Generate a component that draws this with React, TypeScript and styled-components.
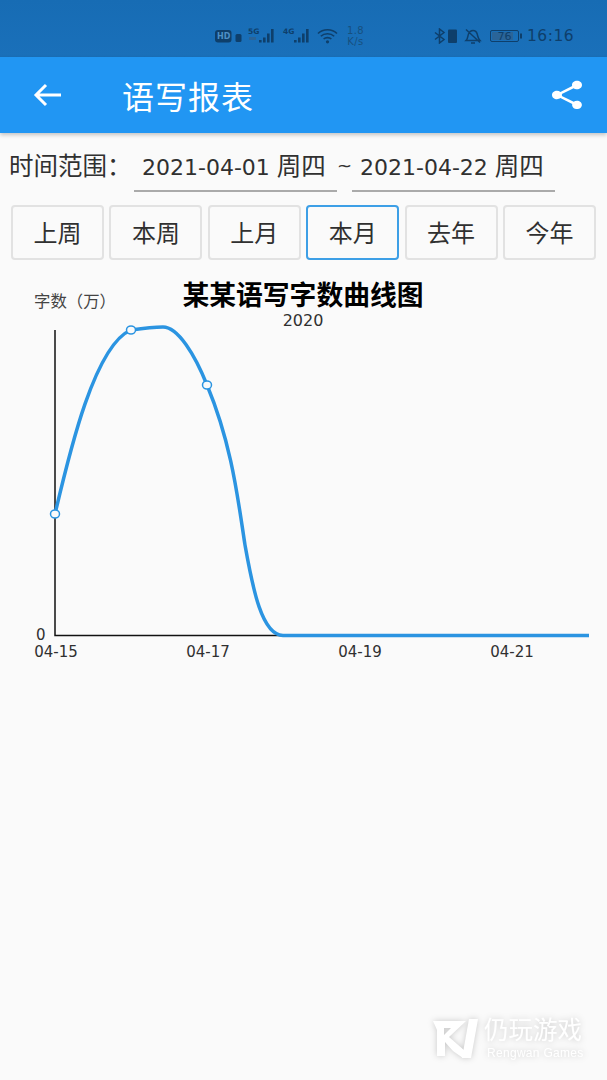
import styled, { createGlobalStyle } from "styled-components";

const GlobalStyle = createGlobalStyle`
  html, body {
    margin: 0;
    padding: 0;
    background: #fafafa;
  }
`;

const Page = styled.div`
  position: relative;
  width: 607px;
  height: 1080px;
  overflow: hidden;
  background: #fafafa;
  color: #303030;
  font-family: "DejaVu Sans", "Noto Sans CJK SC", sans-serif;
`;

const StatusBar = styled.div`
  height: 57px;
  box-sizing: border-box;
  padding: 21px 0 0 215px;
  background: linear-gradient(#176cb4, #1a70ba);
  display: flex;
  align-items: flex-start;
`;

const StatusGroup = styled.div<{ $left?: number }>`
  display: flex;
  align-items: center;
  height: 30px;
  gap: 5px;
  margin-left: ${p => p.$left ?? 0}px;
`;

const Speed = styled.div`
  font-size: 10px;
  line-height: 11px;
  text-align: center;
  margin-left: 3px;
  width: 19px;
  letter-spacing: 0.4px;
  color: #17507f;
`;

const Clock = styled.span`
  font-size: 15.5px;
  letter-spacing: 0.5px;
  margin-left: -1px;
  color: #0e3f6b;
`;

const AppBar = styled.header`
  position: relative;
  height: 76px;
  background: #2196f3;
  box-shadow: 0 2px 4px rgba(0, 0, 0, 0.22);
  display: flex;
  align-items: center;
  padding: 0 20px 0 33px;
  color: #fff;
`;

const Title = styled.h1`
  margin: 0 0 0 61px;
  flex: 1;
  font: 400 32px "Noto Sans CJK SC", sans-serif;
  letter-spacing: 1px;
`;

const RangeRow = styled.div`
  display: flex;
  align-items: flex-start;
  padding: 18px 0 0 9px;
  height: 54px;
`;

const RangeLabel = styled.span`
  width: 125px;
  font: 400 24.5px/28px "Noto Sans CJK SC", sans-serif;
`;

const DateField = styled.div`
  width: 203px;
  height: 41px;
  box-sizing: border-box;
  border-bottom: 2px solid #aaa;
  padding-left: 8px;
  font-size: 22px;
  line-height: 28px;
  white-space: nowrap;
`;

const Weekday = styled.span`
  font-family: "Noto Sans CJK SC", sans-serif;
  font-size: 24.5px;
`;

const Tilde = styled.span`
  width: 15px;
  text-align: center;
  font-size: 18px;
  line-height: 30px;
`;

const ButtonRow = styled.div`
  display: grid;
  grid-template-columns: repeat(6, 93px);
  column-gap: 5.4px;
  padding: 0 11px;
`;

const RangeButton = styled.button<{ $active?: boolean }>`
  height: 55px;
  padding: 0 0 3px;
  background: #fafafa;
  border: 2px solid ${p => (p.$active ? "#3d9fe6" : "#e2e2e2")};
  border-radius: 4px;
  color: #303030;
  font: 400 24px "Noto Sans CJK SC", sans-serif;
`;

const ChartWrap = styled.section`
  margin-top: 13px;
`;

const Chart = styled.svg`
  display: block;
  width: 607px;
  height: 400px;
`;

const AxisLabel = styled.text<{ $size?: number }>`
  font-size: ${p => p.$size ?? 15}px;
  fill: #303030;
`;

const CnLabel = styled.text`
  font-family: "Noto Sans CJK SC", sans-serif;
  font-size: 16.4px;
  fill: #444;
`;

const ChartTitle = styled.text`
  font-family: "Noto Sans CJK SC", sans-serif;
  font-size: 26.8px;
  font-weight: 700;
  fill: #000;
`;

const Watermark = styled.div`
  position: absolute;
  left: 432px;
  top: 1014px;
  display: flex;
  gap: 6px;
  color: #fff;
  filter: drop-shadow(0 0 3px rgba(0, 0, 0, 0.2));
`;

const WatermarkLogo = styled.svg`
  margin-top: 4px;
`;

const WatermarkText = styled.div`
  display: flex;
  flex-direction: column;
`;

const WatermarkCn = styled.span`
  font: 400 24.5px/30px "Noto Sans CJK SC", sans-serif;
`;

const WatermarkEn = styled.span`
  font: 400 12px/16px "Liberation Sans", sans-serif;
  letter-spacing: 0.3px;
  margin: 1px 0 0 3px;
`;

const IconText = styled.text<{ $size?: number; $weight?: number; $fill?: string }>`
  font-size: ${p => p.$size ?? 7.5}px;
  font-weight: ${p => p.$weight ?? 700};
  fill: ${p => p.$fill ?? "#0e3f6b"};
`;

function Signal({ tag, sub }: { tag: string; sub?: boolean }) {
  return (
    <svg width="30" height="18" viewBox="0 0 30 18">
      <IconText x="1" y="7">{tag}</IconText>
      {sub && <rect x="2" y="10" width="7" height="3" fill="#2a6498" />}
      <g fill="#0e3f6b">
        <rect x="12" y="13" width="2.6" height="2.5" />
        <rect x="16" y="10.5" width="2.6" height="5" />
        <rect x="20" y="6.5" width="2.6" height="9" />
        <rect x="24" y="2" width="2.6" height="13.5" />
      </g>
    </svg>
  );
}

const dates = [
  { x: 56, label: "04-15" },
  { x: 208, label: "04-17" },
  { x: 360, label: "04-19" },
  { x: 512, label: "04-21" },
];
const points = [[55, 514], [131, 330], [207, 385]];
const ranges = ["上周", "本周", "上月", "本月", "去年", "今年"];

export default function App() {
  return (
    <Page>
      <GlobalStyle />
      <StatusBar>
        <StatusGroup>
          <svg width="27" height="14" viewBox="0 0 27 14">
            <rect x="0" y="1" width="16.5" height="12.5" rx="3" fill="#0e3f6b" />
            <IconText x="2" y="10" $size={8} $fill="#4d8fc6">HD</IconText>
            <rect x="20.5" y="5" width="6" height="8" rx="1.5" fill="#0e3f6b" />
          </svg>
          <Signal tag="5G" sub />
          <Signal tag="4G" />
          <svg width="21" height="16" viewBox="0 0 21 16" fill="none" stroke="#0e3f6b" strokeWidth="1.6">
            <path d="M1 5.5c5-5 14-5 19 0M3.8 8.3c3.5-3.4 9.9-3.4 13.4 0M6.6 11c2-1.8 5.8-1.8 7.8 0" />
            <circle cx="10.5" cy="13.8" r="1.6" fill="#0e3f6b" stroke="none" />
          </svg>
          <Speed>1.8<br />K/s</Speed>
        </StatusGroup>
        <StatusGroup $left={69}>
          <svg width="24" height="16" viewBox="0 0 24 16" fill="none" stroke="#0e3f6b" strokeWidth="1.5">
            <path d="M1 4.5l9 7-4.5 3.5V1L10 4.5l-9 7" />
            <rect x="14" y="1.5" width="9" height="13.5" rx="1" fill="#0e3f6b" stroke="none" />
          </svg>
          <svg width="18" height="16" viewBox="0 0 18 16" fill="none" stroke="#0e3f6b" strokeWidth="1.5" style={{ marginLeft: 1 }}>
            <path d="M2 12.5c2-2 1.5-4 2.5-6.5C5.5 3.5 7.5 2.5 9 2.5s3.5 1 4.2 3.500c.7 2.500.8 4.500 2.800 6.500zM7 15h4M2 1.500l14 13" />
          </svg>
          <svg width="33" height="14" viewBox="0 0 33 14" style={{ marginLeft: 3 }}>
            <rect x=".5" y="1.5" width="28" height="11" rx="1.5" fill="none" stroke="#0e3f6b" />
            <rect x="2" y="3" width="21" height="8" fill="#2a6498" />
            <rect x="30" y="4.5" width="2" height="5" fill="#0e3f6b" />
            <IconText x="7.5" y="11" $size={11} $weight={400}>76</IconText>
          </svg>
          <Clock>16:16</Clock>
        </StatusGroup>
      </StatusBar>

      <AppBar>
        <svg width="28" height="28" viewBox="0 0 28 28" fill="none" stroke="#fff" strokeWidth="3">
          <path d="M28 14H3M13 4 3 14l10 10" />
        </svg>
        <Title>语写报表</Title>
        <svg width="40" height="34" viewBox="0 0 24 24" preserveAspectRatio="none" fill="#fff">
          <path d="M18 16.08c-.76 0-1.44.3-1.96.77L8.91 12.7c.05-.23.09-.46.09-.7s-.04-.47-.09-.7l7.05-4.11c.54.5 1.25.81 2.04.81 1.66 0 3-1.34 3-3s-1.34-3-3-3-3 1.34-3 3c0 .24.04.47.09.7L8.04 9.81C7.5 9.31 6.79 9 6 9c-1.66 0-3 1.34-3 3s1.34 3 3 3c.79 0 1.5-.31 2.04-.81l7.12 4.16c-.05.21-.08.43-.08.65 0 1.61 1.31 2.92 2.92 2.92 1.61 0 2.92-1.31 2.92-2.92s-1.31-2.92-2.92-2.92z" />
        </svg>
      </AppBar>

      <RangeRow>
        <RangeLabel>时间范围：</RangeLabel>
        <DateField>2021-04-01 <Weekday>周四</Weekday></DateField>
        <Tilde>~</Tilde>
        <DateField>2021-04-22 <Weekday>周四</Weekday></DateField>
      </RangeRow>

      <ButtonRow>
        {ranges.map(r => (
          <RangeButton key={r} $active={r === "本月"}>{r}</RangeButton>
        ))}
      </ButtonRow>

      <ChartWrap>
        <Chart viewBox="0 273 607 400" preserveAspectRatio="xMinYMin">
          <ChartTitle x="303" y="304.5" textAnchor="middle">某某语写字数曲线图</ChartTitle>
          <AxisLabel x="303" y="326" textAnchor="middle" $size={16}>2020</AxisLabel>
          <CnLabel x="34" y="307">字数（万）</CnLabel>
          <path d="M55 330V635.5H285" fill="none" stroke="#111" strokeWidth="1.5" />
          <path
            d="M55 514C70 450 95 345 131 330C145 328 155 327 163 327C178 327 195 355 207 385C232 445 238 500 245 545C253 590 262 635 283 635.5L589 635.5"
            fill="none"
            stroke="#2b94e1"
            strokeWidth="3.5"
          />
          {points.map(([x, y]) => (
            <ellipse key={x} cx={x} cy={y} rx="4.5" ry="4" fill="#fafafa" stroke="#2b94e1" strokeWidth="1.5" />
          ))}
          <AxisLabel x="36" y="640">0</AxisLabel>
          {dates.map(d => (
            <AxisLabel key={d.x} x={d.x} y="657" textAnchor="middle">{d.label}</AxisLabel>
          ))}
        </Chart>
      </ChartWrap>

      <Watermark>
        <WatermarkLogo width="46" height="42" viewBox="0 0 46 42" fill="#fff">
          <path fillRule="evenodd" d="M1 3H34L17 19 33 33 31 40 21 33 13 24V38L5 38V12L1 3ZM12 10V17L19 10Z" />
          <path d="M37 1H46L39 40H30L37 1Z" />
        </WatermarkLogo>
        <WatermarkText>
          <WatermarkCn>仍玩游戏</WatermarkCn>
          <WatermarkEn>Rengwan Games</WatermarkEn>
        </WatermarkText>
      </Watermark>
    </Page>
  );
}
